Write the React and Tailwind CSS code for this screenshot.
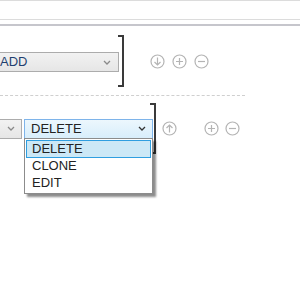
import React from 'react';

const Chevron = ({ color = '#8a8a8a' }) => (
  <svg width="8" height="5" viewBox="0 0 8 5">
    <path d="M1 1 L4 4 L7 1" fill="none" stroke={color} strokeWidth="1.3" />
  </svg>
);

function CircleIcon({ kind }) {
  return (
    <svg width="15" height="15" viewBox="0 0 15 15" className="shrink-0">
      <circle cx="7.5" cy="7.5" r="6.5" fill="none" stroke="#b4b4b4" strokeWidth="1.2" />
      {kind === 'plus' && (
        <path d="M4 7.5 H11 M7.5 4 V11" stroke="#b4b4b4" strokeWidth="1.2" />
      )}
      {kind === 'minus' && <path d="M4 7.5 H11" stroke="#b4b4b4" strokeWidth="1.2" />}
      {kind === 'down' && (
        <path d="M7.5 3.5 V11 M4.5 8 L7.5 11 L10.5 8" fill="none" stroke="#b4b4b4" strokeWidth="1.2" />
      )}
      {kind === 'up' && (
        <path d="M7.5 11.5 V4 M4.5 7 L7.5 4 L10.5 7" fill="none" stroke="#b4b4b4" strokeWidth="1.2" />
      )}
    </svg>
  );
}

const Bracket = ({ h }) => (
  <div className={`w-[6px] ${h} border-y-2 border-r-2 border-[#3a3a3a] shrink-0`} />
);

export default function App() {
  return (
    <div
      className="w-[300px] h-[300px] overflow-hidden bg-white text-[13px] text-[#222]"
      style={{ fontFamily: '"Liberation Sans", Arial, sans-serif' }}
    >
      <div className="h-[20px] border-y border-[#dcdcdc]" />
      <div className="mt-[4px] h-[2px] bg-[#c6c6cc]" />

      {/* row 1 */}
      <div className="h-[69px] pt-[9px] flex items-start">
        <div className="flex items-center w-[124px] h-[52px] shrink-0">
          <div className="shrink-0 ml-[-6px] w-[125px] h-[20px] mt-[2px] border border-[#acacac] bg-gradient-to-b from-[#f2f2f2] to-[#e6e6e6] flex items-center justify-between pl-[5px] pr-[7px]">
            <span className="text-[#1f3f6f]">ADD</span>
            <Chevron />
          </div>
          <div className="ml-[-1px] self-stretch flex">
            <Bracket h="h-[52px]" />
          </div>
        </div>
        <div className="flex items-center gap-[7px] ml-[26px] mt-[19px]">
          <CircleIcon kind="down" />
          <CircleIcon kind="plus" />
          <CircleIcon kind="minus" />
        </div>
      </div>

      <div className="w-[245px] border-t border-dashed border-[#cfcfcf]" />

      {/* row 2 */}
      <div className="pt-[7px] flex items-start">
        <div className="flex items-center h-[51px] shrink-0">
          <div className="shrink-0 ml-[-20px] w-[42px] h-[20px] border border-[#acacac] bg-gradient-to-b from-[#f2f2f2] to-[#e6e6e6] flex items-center justify-end pr-[6px]">
            <Chevron />
          </div>
          <div className="relative ml-[2px] shrink-0">
            <div className="w-[129px] h-[20px] border border-[#7eb4ea] bg-gradient-to-b from-[#ecf7fd] to-[#d8eefb] flex items-center justify-between pl-[6px] pr-[6px]">
              <span>DELETE</span>
              <Chevron color="#333" />
            </div>
            <div className="absolute left-0 top-[19px] w-[129px] border border-[#8c8c8c] bg-white shadow-[3px_3px_2px_rgba(0,0,0,0.45)] z-10 p-px">
              <div className="h-[18px] border border-[#2f9ee0] bg-[#cce8f6] flex items-center pl-[5px]">DELETE</div>
              <div className="h-[17px] flex items-center pl-[6px]">CLONE</div>
              <div className="h-[17px] flex items-center pl-[6px]">EDIT</div>
            </div>
          </div>
          <div className="ml-[-3px] self-stretch flex">
            <Bracket h="h-[51px]" />
          </div>
        </div>
        <div className="flex items-center ml-[6px] mt-[18px]">
          <CircleIcon kind="up" />
          <div className="flex items-center gap-[6px] ml-[27px]">
            <CircleIcon kind="plus" />
            <CircleIcon kind="minus" />
          </div>
        </div>
      </div>
    </div>
  );
}
